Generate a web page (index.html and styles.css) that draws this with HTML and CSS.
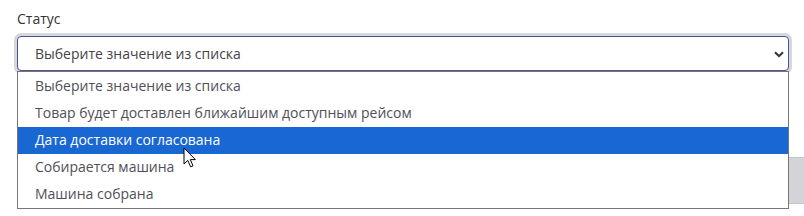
FILE: index.html
```html
<!DOCTYPE html>
<html lang="ru">
<head>
<meta charset="utf-8">
<link rel="stylesheet" href="styles.css">
</head>
<body>
<div class="page">
  <div class="behind"></div>
  <div class="field">
    <div class="label">Статус</div>
    <div class="select">
      <span class="value">Выберите значение из списка</span>
      <svg class="chev" width="10" height="7" viewBox="0 0 10 7"><path d="M1 1.2 L5 5.2 L9 1.2" fill="none" stroke="#333" stroke-width="2"/></svg>
    </div>
    <ul class="list">
      <li>Выберите значение из списка</li>
      <li>Товар будет доставлен ближайшим доступным рейсом</li>
      <li class="active">Дата доставки согласована</li>
      <li>Собирается машина</li>
      <li>Машина собрана</li>
    </ul>
  </div>
  <svg class="cursor" width="14" height="22" viewBox="0 0 14 22"><path d="M1 1 L1 17 L4.8 13.4 L7.6 19.8 L10 18.8 L7.3 12.6 L12.4 12.6 Z" fill="#fff" stroke="#000" stroke-width="1" stroke-linejoin="miter"/></svg>
</div>
</body>
</html>
```
FILE: styles.css
```css
html, body { margin: 0; padding: 0; background: #fff; }
body { font-family: "Open Sans", "Liberation Sans", sans-serif; }
.page { position: relative; width: 804px; height: 216px; overflow: hidden; }
.behind {
  position: absolute; left: 788px; top: 157px; width: 20px; height: 47px;
  background: #d3d3d9; border-top: 1px solid #c4c4cc; border-bottom: 1px solid #c4c4cc;
  box-sizing: border-box;
}
.field { position: relative; padding: 9px 15px 0 17px; }
.label { font-size: 14px; line-height: 19px; color: #333; margin-bottom: 8px; }
.select {
  box-sizing: border-box; height: 35px; width: 772px;
  border: 1px solid #4d5196; border-radius: 4px;
  box-shadow: 0 0 0 3px #d6d6dd;
  display: flex; align-items: center; justify-content: space-between;
  padding: 0 4px 0 17px; font-size: 14px; color: #444; background: #fff;
}
.chev { margin-top: 1px; }
.list {
  list-style: none; margin: 0; padding: 1px 0 0; box-sizing: border-box;
  width: 772px; border: 1px solid #767676; background: #fff;
  position: relative;
}
.list li { height: 27px; line-height: 26px; padding-left: 17px; font-size: 14px; color: #4f4f58; }
.list li.active { background: #1967d2; color: #fff; }
.cursor { position: absolute; left: 183px; top: 147px; }
```
